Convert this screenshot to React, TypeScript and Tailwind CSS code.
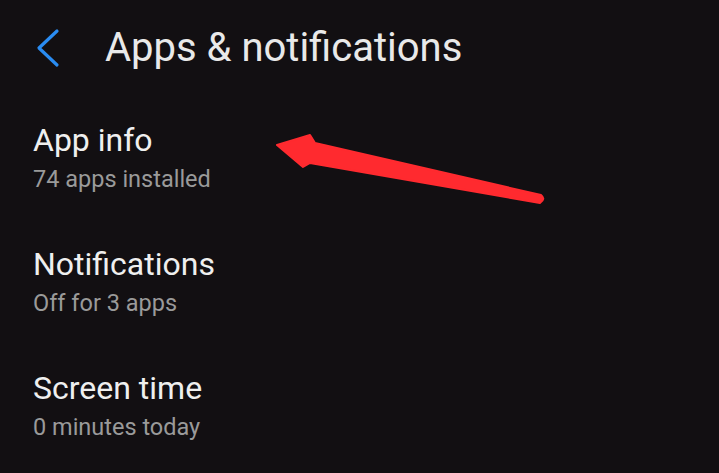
import React from 'react';

const items = [
  { title: 'App info', sub: '74 apps installed' },
  { title: 'Notifications', sub: 'Off for 3 apps' },
  { title: 'Screen time', sub: '0 minutes today' },
];

const App = () => {
  return (
    <div className="relative w-[719px] h-[473px] overflow-hidden bg-[#120f12] font-['Roboto',sans-serif]">
      {/* Header */}
      <div className="flex items-center h-[96px] pl-[36px]">
        <svg width="26" height="40" viewBox="0 0 26 40" className="mr-[43px]">
          <path d="M21 3 L3 20 L21 37" fill="none" stroke="#2a8cf2" strokeWidth="3.2" strokeLinecap="round" strokeLinejoin="round" />
        </svg>
        <h1 className="text-[40px] leading-none text-[#e9e9e9]">Apps &amp; notifications</h1>
      </div>

      {/* List */}
      <div className="flex flex-col pl-[33px]">
        {items.map((it) => (
          <div key={it.title} className="flex flex-col h-[124px] pt-[25px]">
            <span className="text-[32px] leading-[38px] text-[#efefef]">{it.title}</span>
            <span className="text-[23.5px] leading-[28px] mt-[6px] text-[#9a9a9a]">{it.sub}</span>
          </div>
        ))}
      </div>

      {/* Red annotation arrow */}
      <svg className="absolute left-0 top-0" width="719" height="473" viewBox="0 0 719 473">
        <path
          d="M277 145 L310 135 L315 143 L541 195 Q546 199 540 203 L310 163 L303 167 Z"
          fill="#ff2a2f"
          stroke="#ff2a2f"
          strokeWidth="2"
          strokeLinejoin="round"
        />
      </svg>
    </div>
  );
};

export default App;
